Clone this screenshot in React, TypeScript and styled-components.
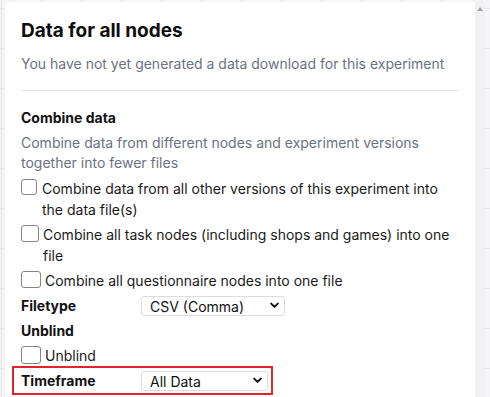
import React from "react";
import styled, { createGlobalStyle } from "styled-components";

const GlobalStyle = createGlobalStyle`
  html, body {
    margin: 0;
    padding: 0;
    height: 100%;
  }
  body {
    font-family: Inter, "Noto Sans", "Liberation Sans", sans-serif;
    background-color: #f5f5f7;
    background-image:
      linear-gradient(to right, #e6e6e9 1px, transparent 1px),
      linear-gradient(to bottom, #e6e6e9 1px, transparent 1px);
    background-size: 40px 40px;
    background-position: 1px 8px;
    overflow: hidden;
  }
`;

const Canvas = styled.div`
  height: 397px;
  padding: 2px 0 0 5px;
  box-sizing: border-box;
  overflow: hidden;
`;

const Modal = styled.div`
  display: flex;
  width: 480px;
  height: 420px;
  background: #ffffff;
  border-top-left-radius: 6px;
  overflow: hidden;
`;

const Body = styled.div`
  flex: 1;
  padding: 16px 16px 0 16px;
  color: #111111;
`;

const ScrollTrack = styled.div`
  width: 10px;
  background: #f1f1f1;
  display: flex;
  justify-content: center;
  padding-top: 5px;
  box-sizing: border-box;
`;

const UpArrow = styled.div`
  width: 0;
  height: 0;
  border-left: 3.5px solid transparent;
  border-right: 3.5px solid transparent;
  border-bottom: 4px solid #a3a3a3;
`;

const Title = styled.h2`
  margin: 0;
  font-size: 19px;
  line-height: 26px;
  font-weight: 700;
  color: #0d0d0d;
`;

const Muted = styled.p<{ $top?: number }>`
  margin: ${(p) => p.$top ?? 0}px 0 0 0;
  font-size: 14px;
  line-height: 20px;
  color: #6b7280;
`;

const Rule = styled.hr`
  border: 0;
  border-top: 1px solid #e5e5e5;
  margin: 16px 0 16px 0;
`;

const SectionLabel = styled.div`
  font-size: 14px;
  line-height: 21px;
  font-weight: 700;
  color: #111111;
`;

const Stack = styled.div`
  display: flex;
  flex-direction: column;
  gap: 4px;
  margin-top: 5px;
`;

const CheckRow = styled.label`
  display: flex;
  align-items: flex-start;
  font-size: 14px;
  line-height: 21px;
  color: #1a1a1a;
`;

const Box = styled.span<{ $w: number; $h: number }>`
  flex: none;
  width: ${(p) => p.$w}px;
  height: ${(p) => p.$h}px;
  margin-top: 1px;
  margin-right: ${(p) => (p.$w > 17 ? 4 : 5)}px;
  box-sizing: border-box;
  border: 1px solid #858585;
  border-radius: 3px;
  background: #fff;
`;

const FieldRow = styled.div`
  display: grid;
  grid-template-columns: 120px auto;
  align-items: center;
  width: fit-content;
  font-size: 14px;
  line-height: 21px;
`;

const Highlighted = styled(FieldRow)`
  position: relative;
  &::after {
    content: "";
    position: absolute;
    top: -4px;
    left: -9px;
    right: -5px;
    bottom: -4px;
    border: 2px solid #e1252b;
  }
`;

const FieldLabel = styled.span`
  font-weight: 700;
  color: #111111;
`;

const SelectWrap = styled.div<{ $w: number }>`
  position: relative;
  width: ${(p) => p.$w}px;
  height: 20px;
`;

const Select = styled.select`
  appearance: none;
  width: 100%;
  height: 100%;
  box-sizing: border-box;
  border: 1px solid #dcdcdc;
  border-radius: 3px;
  background: #fff;
  padding: 0 0 0 8px;
  font-family: inherit;
  font-size: 14px;
  color: #111;
  outline: none;
`;

const Chevron = styled.svg`
  position: absolute;
  right: 6px;
  top: 6px;
  width: 9px;
  height: 7px;
  pointer-events: none;
`;

function Dropdown({ width, value }: { width: number; value: string }) {
  return (
    <SelectWrap $w={width}>
      <Select defaultValue={value}>
        <option>{value}</option>
      </Select>
      <Chevron viewBox="0 0 9 7">
        <path d="M1.2 1.6 L4.5 4.9 L7.8 1.6" fill="none" stroke="#111" strokeWidth="2" strokeLinecap="round" strokeLinejoin="round" />
      </Chevron>
    </SelectWrap>
  );
}

function Check({ w, h = 16, children }: { w: number; h?: number; children: React.ReactNode }) {
  return (
    <CheckRow>
      <Box $w={w} $h={h} />
      <span>{children}</span>
    </CheckRow>
  );
}

export default function App() {
  return (
    <>
      <GlobalStyle />
      <Canvas>
        <Modal>
          <Body>
            <Title>Data for all nodes</Title>
            <Muted $top={10}>You have not yet generated a data download for this experiment</Muted>
            <Rule />
            <SectionLabel>Combine data</SectionLabel>
            <Muted $top={5}>
              Combine data from different nodes and experiment versions together into fewer files
            </Muted>
            <Stack>
              <Check w={16}>Combine data from all other versions of this experiment into the data file(s)</Check>
              <Check w={18} h={17}>Combine all task nodes (including shops and games) into one file</Check>
              <Check w={20} h={17}>Combine all questionnaire nodes into one file</Check>
              <FieldRow>
                <FieldLabel>Filetype</FieldLabel>
                <Dropdown width={144} value="CSV (Comma)" />
              </FieldRow>
              <SectionLabel>Unblind</SectionLabel>
              <Check w={20} h={18}>Unblind</Check>
              <Highlighted>
                <FieldLabel>Timeframe</FieldLabel>
                <Dropdown width={127} value="All Data" />
              </Highlighted>
            </Stack>
          </Body>
          <ScrollTrack>
            <UpArrow />
          </ScrollTrack>
        </Modal>
      </Canvas>
    </>
  );
}
